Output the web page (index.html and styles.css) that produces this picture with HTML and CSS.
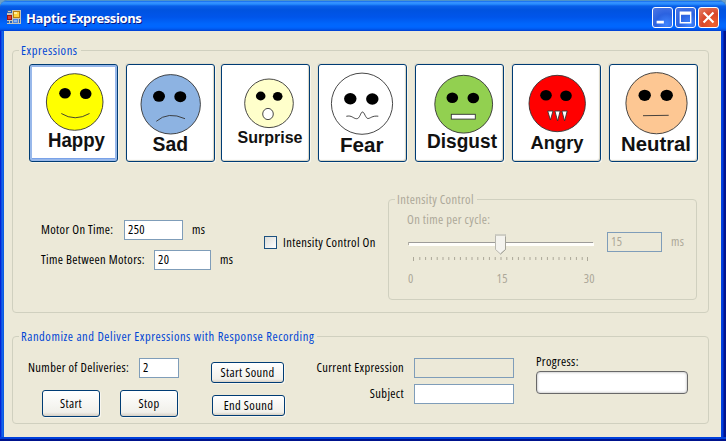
FILE: index.html
```html
<!DOCTYPE html>
<html lang="en">
<head>
<meta charset="utf-8">
<title>Haptic Expressions</title>
<link rel="stylesheet" href="styles.css">
</head>
<body>
<div class="window">
  <header class="titlebar">
    <svg class="app-icon" width="14" height="14" viewBox="0 0 14 14">
      <rect width="14" height="14" fill="#c5c3b8"/>
      <rect x="0" y="0" width="5" height="3" fill="#2a62b8"/><rect x="1" y="1" width="3" height="1" fill="#c5c3b8"/>
      <rect x="6" y="1" width="7" height="7" fill="#b87d10"/><rect x="7" y="2" width="5" height="5" fill="#ffd33d"/><rect x="7" y="2" width="3" height="2" fill="#fff0a0"/>
      <rect x="0" y="5" width="5" height="5" fill="#9c1414"/><rect x="1" y="6" width="3" height="3" fill="#dd4034"/>
      <rect x="6" y="9" width="5" height="4" fill="#4d87e0"/><rect x="7" y="10" width="3" height="2" fill="#88b4f5"/>
      <path d="M0 11h2v2H0zM3 11h2v2H3zM12 9h1v4h-1z" fill="#2a62b8"/>
    </svg>
    <h1 class="title">Haptic Expressions</h1>
    <div class="controls">
      <svg class="ctl" viewBox="0 0 21 21"><path d="M4 14h8v3H4z" fill="#fff"/></svg>
      <svg class="ctl" viewBox="0 0 21 21"><path d="M4 4h13v13H4zM5.500 7.500v8h10v-8z" fill="#fff" fill-rule="evenodd"/></svg>
      <svg class="ctl close" viewBox="0 0 21 21"><path d="M5 5l11 11M16 5l-11 11" stroke="#fff" stroke-width="2.400"/></svg>
    </div>
  </header>
  <main class="client">
    <section class="group expressions">
      <h2 class="legend w-exp">Expressions</h2>
      <div class="faces">
        <button class="face focused"><svg viewBox="0 0 89 98">
          <circle cx="45.700" cy="38" r="28.300" fill="#ff0"/><ellipse cx="36" cy="29.300" rx="5.800" ry="5.200" class="eye"/><ellipse cx="56.700" cy="29.700" rx="5.800" ry="5.200" class="eye"/>
          <path d="M32.300 49.500Q46 58 60.500 49.500"/><text x="19" y="83" font-size="19.500" textLength="57" lengthAdjust="spacingAndGlyphs">Happy</text></svg></button>
        <button class="face"><svg viewBox="0 0 89 98">
          <circle cx="44.700" cy="40.300" r="29.700" fill="#8db3e2"/><ellipse cx="33" cy="32.300" rx="6" ry="5.500" class="eye"/><ellipse cx="54.300" cy="32.700" rx="6" ry="5.500" class="eye"/>
          <path d="M30.300 57.300Q42 47 59 54.700"/><text x="26.500" y="86.700" font-size="19.500" textLength="35.500" lengthAdjust="spacingAndGlyphs">Sad</text></svg></button>
        <button class="face tight"><svg viewBox="0 0 89 98">
          <circle cx="48" cy="39.300" r="24.300" fill="#ffffcb"/><ellipse cx="39.700" cy="32" rx="4.800" ry="4.400" class="eye"/><ellipse cx="56.700" cy="32.300" rx="4.800" ry="4.400" class="eye"/>
          <ellipse cx="47" cy="50" rx="5.300" ry="5.600" fill="#fff"/><text x="16.500" y="79" font-size="16.500" textLength="65" lengthAdjust="spacingAndGlyphs">Surprise</text></svg></button>
        <button class="face"><svg viewBox="0 0 89 98">
          <circle cx="44" cy="39.700" r="30.600" fill="#fff"/><ellipse cx="32.300" cy="34.700" rx="6.200" ry="5.700" class="eye"/><ellipse cx="54.300" cy="35" rx="6.200" ry="5.700" class="eye"/>
          <path d="M28.300 52.300C34 51 35 54.500 38.500 54.700S42.500 48 44.500 48S47.500 54.500 50 54.500S54 51.500 60.300 52.200"/><text x="22" y="87.700" font-size="20.500" textLength="43.500" lengthAdjust="spacingAndGlyphs">Fear</text></svg></button>
        <button class="face"><svg viewBox="0 0 89 98">
          <circle cx="48.700" cy="40.200" r="28.900" fill="#92d050"/><ellipse cx="37.300" cy="33.700" rx="5.800" ry="5.200" class="eye"/><ellipse cx="58.300" cy="34" rx="5.800" ry="5.200" class="eye"/>
          <rect x="36.300" y="50.300" width="24" height="4.800" fill="#fff"/><text x="12" y="84" font-size="19.500" textLength="70" lengthAdjust="spacingAndGlyphs">Disgust</text></svg></button>
        <button class="face"><svg viewBox="0 0 89 98">
          <circle cx="45.200" cy="39.500" r="28.200" fill="#f00"/><ellipse cx="34" cy="31.300" rx="5.800" ry="5.200" class="eye"/><ellipse cx="54" cy="31.700" rx="5.800" ry="5.200" class="eye"/>
          <path class="teeth" d="M35.700 47h5.300l-2.600 9zM42.900 47h5.300l-2.600 10zM49.900 47h5.300l-2.600 10z"/><text x="18.500" y="85" font-size="19" textLength="53" lengthAdjust="spacingAndGlyphs">Angry</text></svg></button>
        <button class="face"><svg viewBox="0 0 89 98">
          <circle cx="47.500" cy="39.200" r="30.600" fill="#fdc793"/><ellipse cx="35.700" cy="31.300" rx="6.200" ry="5.600" class="eye"/><ellipse cx="57.700" cy="31.300" rx="6.200" ry="5.600" class="eye"/>
          <path d="M34 51.700L59.700 51.300"/><text x="12" y="87.300" font-size="20" textLength="70" lengthAdjust="spacingAndGlyphs">Neutral</text></svg></button>
      </div>
      <div class="settings">
        <div class="times">
          <div class="row"><label class="l1">Motor On Time:</label><input class="i1" value="250"><span class="ms">ms</span></div>
          <div class="row"><label class="l2">Time Between Motors:</label><input class="i2" value="20"><span class="ms">ms</span></div>
        </div>
        <label class="check"><span class="box"></span><span class="w-check">Intensity Control On</span></label>
        <section class="group intensity">
          <h3 class="legend w-int">Intensity Control</h3>
          <div class="slider">
            <div class="cycle">On time per cycle:</div>
            <svg width="190" height="30" viewBox="405 233 190 30">
              <path d="M408 242h185v1H408z" fill="#9d9c99"/><path d="M409 243h185v3H409z" fill="#fffefa"/><path d="M408 242h1v3h-1z" fill="#b0aea5"/>
              <path d="M413.500 257v4M587.500 257v4" stroke="#aca899"/>
              <path d="M419.300 258.500H585" stroke="#aca899" stroke-width="3" stroke-dasharray="1 4.800"/>
              <path d="M495.500 234.500h10v15l-5 4.500l-5-4.500z" fill="#f4f3ee" stroke="#b9b8b0"/><path d="M495.500 235h10" stroke="#cfcec4" stroke-width="2"/><path d="M505.500 237v12.500l-5 4.500" fill="none" stroke="#a3a298"/>
            </svg>
            <div class="scale"><span>0</span><span>15</span><span>30</span></div>
          </div>
          <div class="row readout"><input class="i3" value="15" disabled><span class="ms">ms</span></div>
        </section>
      </div>
    </section>
    <section class="group deliver">
      <h2 class="legend w-rand">Randomize and Deliver Expressions with Response Recording</h2>
      <div class="runs">
        <div class="row"><label class="l3">Number of Deliveries:</label><input class="i4" value="2"></div>
        <div class="pair"><button class="btn big">Start</button><button class="btn big">Stop</button></div>
      </div>
      <div class="sounds"><button class="btn">Start Sound</button><button class="btn end">End Sound</button></div>
      <div class="subject">
        <div class="row"><label class="w-cur">Current Expression</label><input class="i5" disabled></div>
        <div class="row"><label>Subject</label><input class="i5"></div>
      </div>
      <div class="progress"><div>Progress:</div><div class="bar"></div></div>
    </section>
  </main>
</div>
</body>
</html>
```
FILE: styles.css
```css
* { box-sizing: border-box; }
body { margin: 0; background: #6f9fc4; overflow: hidden; font: 12.5px/16px "Open Sans", "Liberation Sans", sans-serif; font-stretch: 75%; letter-spacing: 0.35px; color: #000; }
h1, h2, h3 { margin: 0; font: inherit; }
input, button { font: inherit; letter-spacing: inherit; color: inherit; margin: 0; }

.window { width: 726px; height: 441px; background: linear-gradient(90deg, #0019cf 0, #0831d9 1px, #166aee 2px, #0855dd 4px, #0855dd 721px, #0045e0 721px, #0038dc 723px, #001590 724px, #00138c 726px); padding: 0 5px 4px 4px; border-radius: 8px 8px 0 0; box-shadow: inset 0 -2px #00138c, inset 0 -4px #0041dc; }
.titlebar { height: 31px; margin: 0 -5px 0 -4px; display: flex; align-items: flex-start; padding: 0 7px 0 7px; border-radius: 7px 7px 0 0; border-top: 1px solid #4e93c8;
  background: linear-gradient(#0058e6 0, #3a93ff 1px, #288eff 3px, #0a5fe8 5px, #0053e0 9px, #0055ea 16px, #0066fc 23px, #0066ff 26px, #005bf0 28px, #003dd0 30px); }
.app-icon { margin-top: 9px; }
.title { margin: 8px 0 0 5px; font: bold 13px/18px "Open Sans", "Noto Sans", sans-serif; letter-spacing: -0.38px; color: #fff; text-shadow: 1px 1px #0a1883; white-space: nowrap; }
.controls { margin: 6px 0 0 auto; display: flex; gap: 2px; }
.ctl { width: 21px; height: 21px; border: 1px solid #fff; border-radius: 3px; background: radial-gradient(circle at 70% 85%, #3f85ff, #2b62e0 50%, #4f78e4 100%); }
.close { background: radial-gradient(circle at 75% 85%, #f0612f, #d9472a 50%, #e5836b 100%); }

.client { height: 406px; background: #ece9d8; padding: 19px 12px 0 8px; }
.group { position: relative; border: 1px solid #d0d0bf; border-radius: 4px; }
.legend { position: absolute; top: -8px; left: 6px; padding: 0 3px 0 2px; background: #ece9d8; color: #0046d5; white-space: nowrap; }
.w-exp, .w-rand { letter-spacing: .55px; }
.expressions { height: 263px; padding: 13px 0 0 16px; }
.faces { display: flex; gap: 8px; }
.face { width: 89px; height: 98px; flex: none; padding: 0; border: 1px solid #003c74; border-radius: 3px; background: #fff; box-shadow: inset -1px -1px 1px #d8d4c4, 1px 1px #f7f5ea, -1px -1px #e0ddce; }
.face.focused { box-shadow: inset 0 0 0 2px #98b8ea, inset 0 -3px #7aa2e8, 1px 1px #f7f5ea; }
.face.tight { margin-left: -2px; }
.face svg { display: block; width: 89px; height: 98px; margin: -1px; }
.face svg * { stroke: #333; stroke-width: .9; }
.face path { fill: none; }
.face .teeth { fill: #fff; }
.face svg .eye { fill: #000; stroke: none; }
.face svg text { font-family: "Liberation Sans", Arial, sans-serif; font-weight: bold; letter-spacing: 0; fill: #111; stroke: none; }

.settings { display: flex; }
.row { display: flex; align-items: center; white-space: nowrap; }
.times { width: 235px; padding: 58px 0 0 12px; display: grid; gap: 10px; align-content: start; }
input { height: 20px; border: 1px solid #7f9db9; background: #fff; padding: 0 3px 1px; outline: 0; border-radius: 0; }
input:disabled { background: #ece9d8; color: #aca899; }
.l1 { width: 83px; } .i1 { width: 59px; }
.l2 { width: 113px; } .i2 { width: 57px; }
.ms { margin-left: 9px; }
.check { display: flex; align-items: flex-start; gap: 6px; margin-top: 74px; width: 124px; white-space: nowrap; }
.check .w-check { margin-top: -1px; }
.box { width: 13px; height: 13px; border: 1px solid #1c5180; background: linear-gradient(135deg, #dcdcd7, #fff); flex: none; }
.intensity { width: 309px; height: 101px; margin-top: 37px; color: #aca899; display: flex; }
.intensity .legend { color: #aca899; }
.slider { width: 190px; padding: 12px 0 0 16px; }
.cycle { margin-left: 2px; height: 21px; }
.slider svg { display: block; }
.scale { display: flex; justify-content: space-between; width: 187px; margin: 8px 0 0 3px; }
.scale span:nth-child(2) { margin-left: 7px; }
.readout { margin: 32px 0 0 28px; height: 20px; }
.i3 { width: 55px; }

.deliver { height: 88px; margin-top: 23px; display: flex; }
.runs { width: 198px; padding: 21px 0 0 15px; }
.l3 { width: 111px; } .i4 { width: 40px; }
.pair { display: flex; gap: 20px; margin: 12px 0 0 14px; }
.btn { width: 73px; height: 21px; padding: 0; border: 1px solid #003c74; border-radius: 3px; background: linear-gradient(#fff, #f1f0ea 85%, #d6d0c5); box-shadow: 1px 1px #f8f6ee; white-space: nowrap; }
.big { width: 58px; height: 27px; }
.sounds { width: 94px; padding-top: 25px; display: flex; flex-direction: column; gap: 12px; }
.end { margin-left: 1px; }
.subject { width: 209px; padding-top: 21px; display: grid; gap: 6px; align-content: start; }
.subject label { width: 99px; margin-right: 10px; text-align: right; }
.i5 { width: 100px; }
.progress { margin: 17px 0 0 22px; }
.bar { width: 152px; height: 23px; margin-top: 1px; border: 1.500px solid #686868; border-radius: 4px; background: #fff; box-shadow: inset 0 0 2px 1px #d5d5d5; }
```
